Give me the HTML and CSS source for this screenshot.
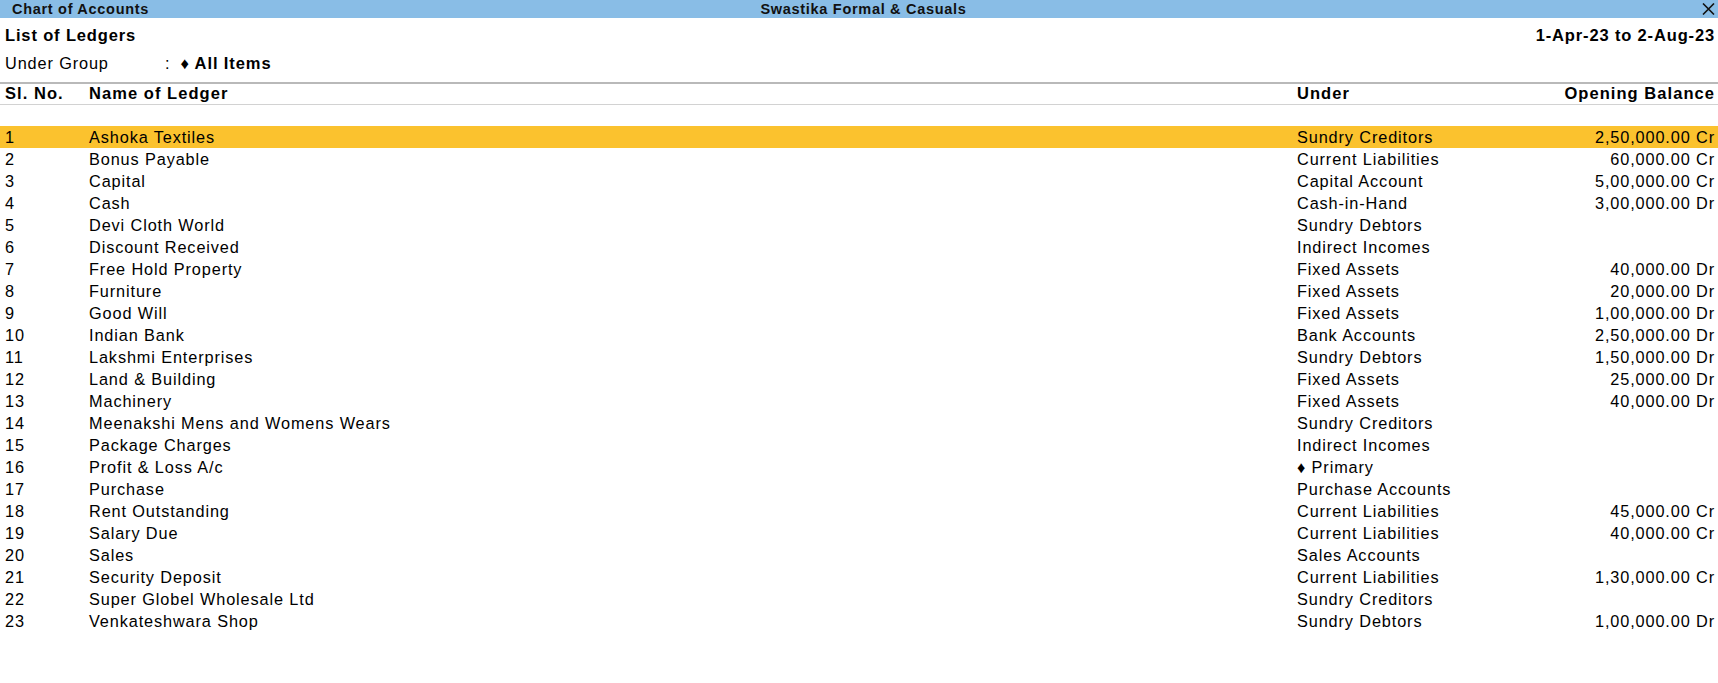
FILE: index.html
```html
<!DOCTYPE html>
<html lang="en">
<head>
  <meta charset="UTF-8" />
  <title>Chart of Accounts</title>
  <meta name="viewport" content="width=device-width, initial-scale=1.0" />
  <link rel="stylesheet" href="styles.css">
</head>
<body>
  <header class="titlebar">
    <div class="title-left">Chart of Accounts</div>
    <div class="title-center">Swastika Formal &amp; Casuals</div>
    <div class="title-right">
      <svg class="close-icon" width="13" height="12" viewBox="0 0 13 12">
        <path d="M1 0.5 L12 11.5 M12 0.5 L1 11.5" stroke="#111" stroke-width="1.6" fill="none" />
      </svg>
    </div>
  </header>

  <div class="report-head">
    <div>List of Ledgers</div>
    <div>1-Apr-23 to 2-Aug-23</div>
  </div>

  <div class="filter">
    <span class="filter-label">Under Group</span>
    <span>:</span><b>&#9830; All Items</b>
  </div>

  <div class="row col-head">
    <div>Sl. No.</div>
    <div>Name of Ledger</div>
    <div>Under</div>
    <div class="amt">Opening Balance</div>
  </div>

  <div class="ledgers">
    <div class="row selected"><div>1</div><div>Ashoka Textiles</div><div>Sundry Creditors</div><div class="amt">2,50,000.00 Cr</div></div>
    <div class="row"><div>2</div><div>Bonus Payable</div><div>Current Liabilities</div><div class="amt">60,000.00 Cr</div></div>
    <div class="row"><div>3</div><div>Capital</div><div>Capital Account</div><div class="amt">5,00,000.00 Cr</div></div>
    <div class="row"><div>4</div><div>Cash</div><div>Cash-in-Hand</div><div class="amt">3,00,000.00 Dr</div></div>
    <div class="row"><div>5</div><div>Devi Cloth World</div><div>Sundry Debtors</div><div class="amt"></div></div>
    <div class="row"><div>6</div><div>Discount Received</div><div>Indirect Incomes</div><div class="amt"></div></div>
    <div class="row"><div>7</div><div>Free Hold Property</div><div>Fixed Assets</div><div class="amt">40,000.00 Dr</div></div>
    <div class="row"><div>8</div><div>Furniture</div><div>Fixed Assets</div><div class="amt">20,000.00 Dr</div></div>
    <div class="row"><div>9</div><div>Good Will</div><div>Fixed Assets</div><div class="amt">1,00,000.00 Dr</div></div>
    <div class="row"><div>10</div><div>Indian Bank</div><div>Bank Accounts</div><div class="amt">2,50,000.00 Dr</div></div>
    <div class="row"><div>11</div><div>Lakshmi Enterprises</div><div>Sundry Debtors</div><div class="amt">1,50,000.00 Dr</div></div>
    <div class="row"><div>12</div><div>Land &amp; Building</div><div>Fixed Assets</div><div class="amt">25,000.00 Dr</div></div>
    <div class="row"><div>13</div><div>Machinery</div><div>Fixed Assets</div><div class="amt">40,000.00 Dr</div></div>
    <div class="row"><div>14</div><div>Meenakshi Mens and Womens Wears</div><div>Sundry Creditors</div><div class="amt"></div></div>
    <div class="row"><div>15</div><div>Package Charges</div><div>Indirect Incomes</div><div class="amt"></div></div>
    <div class="row"><div>16</div><div>Profit &amp; Loss A/c</div><div>&#9830; Primary</div><div class="amt"></div></div>
    <div class="row"><div>17</div><div>Purchase</div><div>Purchase Accounts</div><div class="amt"></div></div>
    <div class="row"><div>18</div><div>Rent Outstanding</div><div>Current Liabilities</div><div class="amt">45,000.00 Cr</div></div>
    <div class="row"><div>19</div><div>Salary Due</div><div>Current Liabilities</div><div class="amt">40,000.00 Cr</div></div>
    <div class="row"><div>20</div><div>Sales</div><div>Sales Accounts</div><div class="amt"></div></div>
    <div class="row"><div>21</div><div>Security Deposit</div><div>Current Liabilities</div><div class="amt">1,30,000.00 Cr</div></div>
    <div class="row"><div>22</div><div>Super Globel Wholesale Ltd</div><div>Sundry Creditors</div><div class="amt"></div></div>
    <div class="row"><div>23</div><div>Venkateshwara Shop</div><div>Sundry Debtors</div><div class="amt">1,00,000.00 Dr</div></div>
  </div>
</body>
</html>
```

FILE: styles.css
```css
* { box-sizing: border-box; }

body {
  margin: 0;
  background: #fff;
  color: #000;
  font-family: 'Liberation Sans', Arial, sans-serif;
  font-size: 16.3px;
  letter-spacing: 0.88px;
}

/* window title */
.titlebar {
  display: grid;
  grid-template-columns: 1fr auto 1fr;
  align-items: center;
  height: 18px;
  line-height: 17px;
  background: #89bde6;
  color: #111;
  font-size: 14.5px;
  font-weight: bold;
  letter-spacing: 0.7px;
  padding: 0 3px 0 12px;
}

.title-right {
  display: flex;
  justify-content: flex-end;
}

.close-icon { display: block; }

/* report heading */
.report-head {
  display: flex;
  justify-content: space-between;
  margin-top: 7px;
  padding: 0 3px 0 5px;
  line-height: 20px;
  font-size: 16.5px;
  font-weight: bold;
  letter-spacing: 0.85px;
}

.filter {
  display: flex;
  align-items: baseline;
  margin-top: 8px;
  margin-bottom: 9px;
  padding: 0 5px;
  line-height: 20px;
}

.filter-label {
  width: 160px;
}

.filter b {
  margin-left: 10px;
  font-size: 16.5px;
  letter-spacing: 0.9px;
}

/* ledger table */
.row {
  display: grid;
  grid-template-columns: 84px 1fr 264px 154px;
  padding: 0 3px 0 5px;
  line-height: 22px;
  white-space: nowrap;
}

.amt { text-align: right; }

.col-head {
  line-height: 19px;
  padding-bottom: 1px;
  font-size: 16.5px;
  font-weight: bold;
  letter-spacing: 1.05px;
  border-top: 2px solid #b9b9b9;
  border-bottom: 1px solid #d2d2d2;
}

.ledgers {
  margin-top: 21px;
}

.row.selected {
  background: #fbc22e;
}
```
